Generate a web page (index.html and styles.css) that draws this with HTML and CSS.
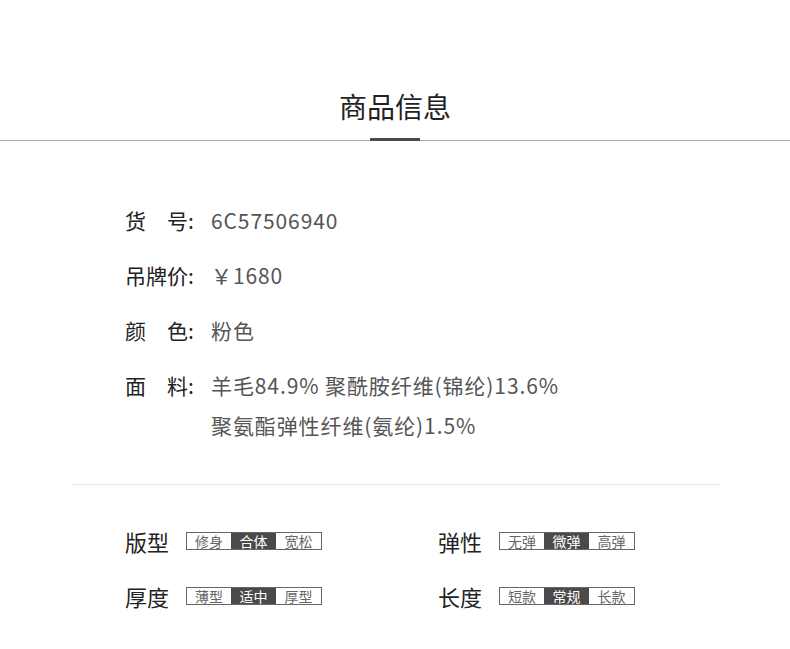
FILE: index.html
```html
<!DOCTYPE html>
<html>
<head>
  <meta charset="utf-8">
  <title>商品信息</title>
  <link rel="stylesheet" href="styles.css">
</head>
<body>
  <div id="page">
    <!-- Section title -->
    <div id="title-bar">
      <h2 class="title">商品信息</h2>
      <div class="title-mark"></div>
    </div>

    <!-- Basic info -->
    <div id="info">
      <div class="info-row">
        <span class="info-label">货　号:</span>
        <span class="info-value">6C57506940</span>
      </div>
      <div class="info-row">
        <span class="info-label">吊牌价:</span>
        <span class="info-value">￥1680</span>
      </div>
      <div class="info-row">
        <span class="info-label">颜　色:</span>
        <span class="info-value">粉色</span>
      </div>
      <div class="info-row">
        <span class="info-label">面　料:</span>
        <span class="info-value">羊毛84.9% 聚酰胺纤维(锦纶)13.6%<br>聚氨酯弹性纤维(氨纶)1.5%</span>
      </div>
    </div>

    <div class="divider"></div>

    <!-- Fit / feel scales -->
    <div id="specs">
      <div class="spec">
        <span class="spec-label">版型</span>
        <div class="scale">
          <span>修身</span><span class="on">合体</span><span>宽松</span>
        </div>
      </div>
      <div class="spec">
        <span class="spec-label">弹性</span>
        <div class="scale">
          <span>无弹</span><span class="on">微弹</span><span>高弹</span>
        </div>
      </div>
      <div class="spec">
        <span class="spec-label">厚度</span>
        <div class="scale">
          <span>薄型</span><span class="on">适中</span><span>厚型</span>
        </div>
      </div>
      <div class="spec">
        <span class="spec-label">长度</span>
        <div class="scale">
          <span>短款</span><span class="on">常规</span><span>长款</span>
        </div>
      </div>
    </div>
  </div>
</body>
</html>
```

FILE: styles.css
```css
/* Base */
html, body {
  margin: 0;
  padding: 0;
  background: #fff;
  color: #222;
  font-family: "Noto Sans CJK SC", "Noto Sans", sans-serif;
}
#page {
  width: 790px;
}
/* Title with underline mark */
#title-bar {
  height: 140px;
  border-bottom: 1px solid #aaa;
  display: flex;
  flex-direction: column;
  align-items: center;
  justify-content: flex-end;
}
.title {
  margin: 0 0 18px 0;
  font-size: 28px;
  line-height: 28px;
  font-weight: normal;
  color: #222;
}
.title-mark {
  width: 50px;
  height: 3px;
  background: #4a4a4a;
  margin-bottom: -1px;
}
/* Info rows */
#info {
  padding: 59px 0 0 125px;
  display: flex;
  flex-direction: column;
  gap: 15px;
}
.info-row {
  display: flex;
  font-size: 21px;
  line-height: 40px;
}
.info-label {
  width: 86px;
  flex-shrink: 0;
  color: #222;
}
.info-value {
  color: #555;
  letter-spacing: 0.9px;
}
.divider {
  margin: 39px 0 0 72px;
  width: 649px;
  height: 1px;
  background: #e6e6e6;
}
/* Scales */
#specs {
  padding: 36px 0 0 125px;
  display: grid;
  grid-template-columns: 313px 313px;
  row-gap: 15px;
}
.spec {
  display: flex;
  align-items: center;
  gap: 17px;
  height: 40px;
}
.spec-label {
  font-size: 22px;
  color: #222;
}
.scale {
  display: flex;
  border: 1px solid #666;
  height: 16px;
}
.scale span {
  width: 45px;
  font-size: 14px;
  line-height: 16px;
  text-align: center;
  color: #666;
}
.scale span:first-child {
  width: 44px;
}
.scale .on {
  background: #4a4a4a;
  color: #fff;
}
```
